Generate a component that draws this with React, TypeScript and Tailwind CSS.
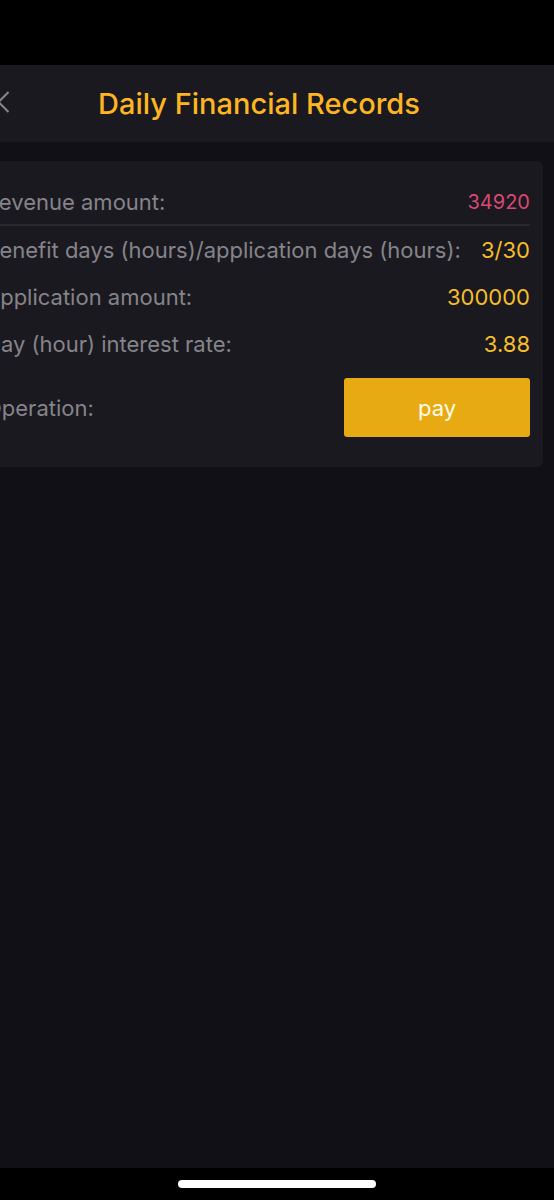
import { useState } from "react";

interface FinanceRecord {
  revenue: string;
  days: string;
  amount: string;
  rate: string;
}

const RECORD: FinanceRecord = {
  revenue: "34920",
  days: "3/30",
  amount: "300000",
  rate: "3.88",
};

const DETAILS = [
  { label: "Benefit days (hours)/application days (hours):", value: RECORD.days },
  { label: "Application amount:", value: RECORD.amount },
  { label: "Day (hour) interest rate:", value: RECORD.rate },
];

export default function App() {
  const [paying, setPaying] = useState(false);

  return (
    <div className="flex min-h-screen flex-col overflow-hidden bg-[#111016] font-['Inter','Liberation_Sans',sans-serif] text-[22px] leading-7">
      {/* Status bar area */}
      <div className="h-[65px] bg-black" />

      <header className="-ml-9 flex h-[77px] items-center bg-[#1a191f]">
        <button
          type="button"
          aria-label="Back"
          className="flex w-12 shrink-0 justify-end pr-[3px] pb-1 text-[#85858a]"
        >
          <svg
            width="12"
            height="22"
            viewBox="0 0 12 22"
            fill="none"
            stroke="currentColor"
            strokeWidth="2"
          >
            <path d="M11.5 1 L1.5 11 L11.5 21" />
          </svg>
        </button>
        <h1 className="flex-1 pr-12 text-center text-[29px] leading-9 font-medium text-[#fdb621]">
          Daily Financial Records
        </h1>
      </header>

      {/* The page is panned sideways, so the card runs past the left edge */}
      <main className="-ml-7 flex-1 pt-[19px] pr-[11px]">
        <section className="rounded-md bg-[#1a191f] px-[13px] pt-[18px] pb-5">
          <div className="flex h-[47px] items-center justify-between border-b-2 border-[#29282e] text-[#85848a]">
            <span>Revenue amount:</span>
            <span className="text-xl text-[#d94872]">{RECORD.revenue}</span>
          </div>
          {DETAILS.map((d) => (
            <div
              key={d.label}
              className="flex h-[47px] items-center justify-between whitespace-nowrap text-[#85848a]"
            >
              <span>{d.label}</span>
              <span className="text-[#f5bd2c]">{d.value}</span>
            </div>
          ))}
          <div className="flex items-center justify-between pt-[11px] pb-[10px] text-[#85848a]">
            <span>Operation:</span>
            <button
              type="button"
              onClick={() => setPaying(true)}
              disabled={paying}
              className="h-[59px] w-[186px] rounded-[3px] bg-[#e8aa12] text-[#fffbea]"
            >
              pay
            </button>
          </div>
        </section>
      </main>

      {/* Home indicator */}
      <div className="flex h-8 items-center justify-center bg-black">
        <div className="h-2 w-[198px] rounded-full bg-white" />
      </div>
    </div>
  );
}
